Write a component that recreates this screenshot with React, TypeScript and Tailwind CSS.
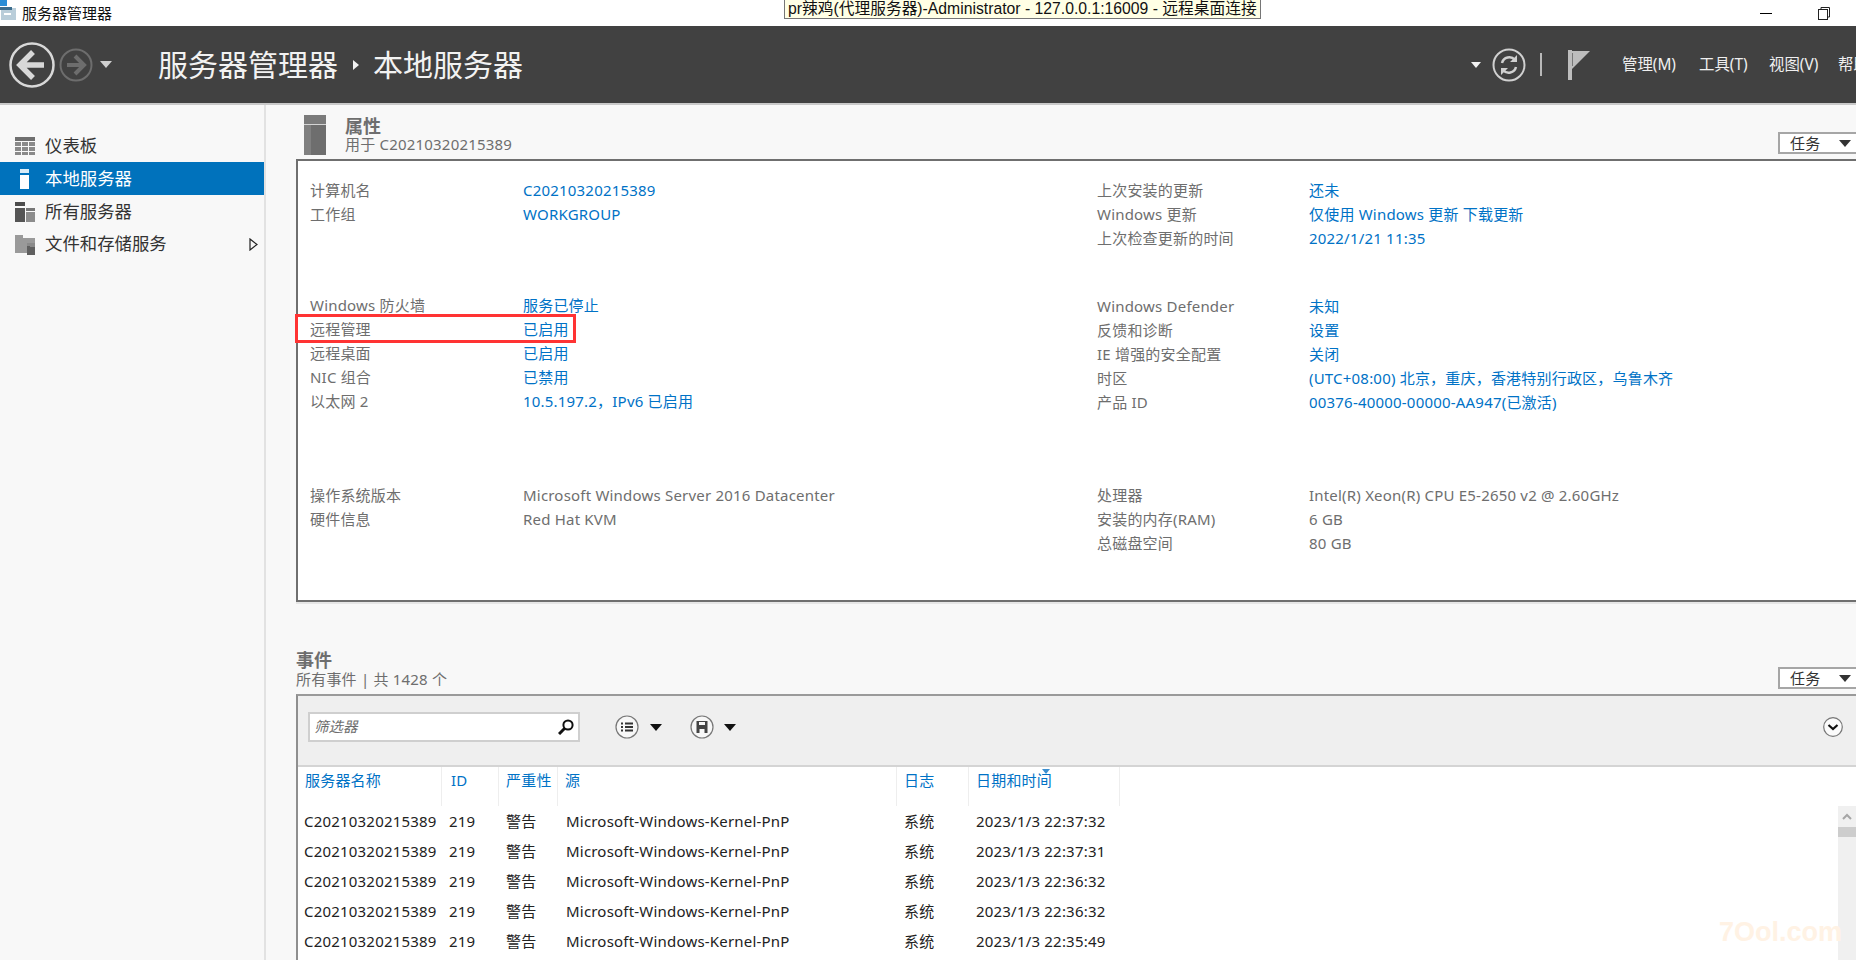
const sideItems = [
  { label: "仪表板", icon: "dashboard" },
  { label: "本地服务器", icon: "local" },
  { label: "所有服务器", icon: "all" },
  { label: "文件和存储服务", icon: "files" },
];

const props = [
  [
    [
      ["计算机名", "C20210320215389", true],
      ["工作组", "WORKGROUP", true],
    ],
    [
      ["上次安装的更新", "还未", true],
      ["Windows 更新", "仅使用 Windows 更新 下载更新", true],
      ["上次检查更新的时间", "2022/1/21 11:35", true],
    ],
  ],
  [
    [
      ["Windows 防火墙", "服务已停止", true],
      ["远程管理", "已启用", true],
      ["远程桌面", "已启用", true],
      ["NIC 组合", "已禁用", true],
      ["以太网 2", "10.5.197.2，IPv6 已启用", true],
    ],
    [
      ["Windows Defender", "未知", true],
      ["反馈和诊断", "设置", true],
      ["IE 增强的安全配置", "关闭", true],
      ["时区", "(UTC+08:00) 北京，重庆，香港特别行政区，乌鲁木齐", true],
      ["产品 ID", "00376-40000-00000-AA947(已激活)", true],
    ],
  ],
  [
    [
      ["操作系统版本", "Microsoft Windows Server 2016 Datacenter", false],
      ["硬件信息", "Red Hat KVM", false],
    ],
    [
      ["处理器", "Intel(R) Xeon(R) CPU E5-2650 v2 @ 2.60GHz", false],
      ["安装的内存(RAM)", "6 GB", false],
      ["总磁盘空间", "80 GB", false],
    ],
  ],
] as [string, string, boolean][][][];

const events = [
  "2023/1/3 22:37:32",
  "2023/1/3 22:37:31",
  "2023/1/3 22:36:32",
  "2023/1/3 22:36:32",
  "2023/1/3 22:35:49",
];

const columns = "grid grid-cols-[144px_57px_59px_339px_72px_151px]";

const SideIcon = ({ name }: { name: string }) => {
  if (name === "dashboard") {
    return (
      <svg width="20" height="20" viewBox="0 0 20 20">
        <rect y="1" width="20" height="4" fill="#6f6f6f" />
        <rect y="6" width="6" height="4" fill="#8a8a8a" />
        <rect x="7" y="6" width="6" height="4" fill="#8a8a8a" />
        <rect x="14" y="6" width="6" height="4" fill="#8a8a8a" />
        <rect y="11" width="6" height="4" fill="#8a8a8a" />
        <rect x="7" y="11" width="6" height="4" fill="#8a8a8a" />
        <rect x="14" y="11" width="6" height="4" fill="#8a8a8a" />
        <rect y="16" width="6" height="3" fill="#8a8a8a" />
        <rect x="7" y="16" width="6" height="3" fill="#8a8a8a" />
        <rect x="14" y="16" width="6" height="3" fill="#8a8a8a" />
      </svg>
    );
  }
  if (name === "local") {
    return (
      <svg width="20" height="20" viewBox="0 0 20 20">
        <rect x="5" y="0" width="9" height="4" fill="#d9ecf7" />
        <rect x="5" y="6" width="9" height="14" fill="#ffffff" />
      </svg>
    );
  }
  if (name === "all") {
    return (
      <svg width="20" height="20" viewBox="0 0 20 20">
        <rect x="0" y="0" width="10" height="4" fill="#4d4d4d" />
        <rect x="0" y="6" width="10" height="14" fill="#555555" />
        <rect x="11" y="6" width="9" height="3" fill="#777777" />
        <rect x="11" y="10" width="9" height="10" fill="#8c8c8c" />
      </svg>
    );
  }
  return (
    <svg width="20" height="20" viewBox="0 0 20 20">
      <path d="M0 0h8v3H20v5H12v10H0z" fill="#9a9a9a" />
      <path d="M12 8h8v9h-5v-3h-3z" fill="#8a8a8a" />
      <rect x="12" y="12" width="8" height="8" fill="#5f5f5f" />
      <rect x="12" y="11" width="3" height="2" fill="#5f5f5f" />
    </svg>
  );
};

const ServerIcon = () => (
  <svg width="22" height="40" viewBox="0 0 22 40" className="shrink-0">
    <rect width="22" height="9" fill="#7b7b7b" />
    <rect y="9" width="22" height="1" fill="#d4d4d4" />
    <rect y="10" width="22" height="30" fill="#6e6e6e" />
    <rect y="10" width="7" height="30" fill="#808080" />
  </svg>
);

const Triangle = ({ className }: { className: string }) => (
  <svg width="12" height="7" viewBox="0 0 12 7" className={className}>
    <path d="M0 0h12L6 7z" fill="currentColor" />
  </svg>
);

const TaskButton = () => (
  <div className="flex h-[22px] w-[78px] shrink-0 items-center border-2 border-r-0 border-[#a6a6a6] bg-white pl-[10px] text-[#333333] leading-[18px]">
    <span>任务</span>
    <Triangle className="ml-[19px] text-[#333333]" />
  </div>
);

const KeyValues = ({ rows, shift, labelWidth }: { rows: [string, string, boolean][]; shift?: boolean; labelWidth: string }) => (
  <div className={shift ? "mt-px" : ""}>
    {rows.map(([k, v, link]) => (
      <div key={k} className="flex h-[24px] items-center whitespace-nowrap leading-[24px]">
        <span className={`${labelWidth} shrink-0 text-[#6e6e6e]`}>{k}</span>
        <span className={link ? "text-[#0072c6]" : "text-[#6e6e6e]"}>{v}</span>
      </div>
    ))}
  </div>
);

export default function App() {
  return (
    <div className="relative flex h-[960px] w-[1856px] flex-col overflow-hidden bg-[#f8f8f8] font-['Noto_Sans','Noto_Sans_CJK_SC',sans-serif] text-[15px] tracking-[0.2px]">
      {/* title bar */}
      <div className="relative flex h-[26px] shrink-0 items-center bg-white">
        <svg width="18" height="21" viewBox="0 0 18 21" className="mb-[5px] shrink-0">
          <rect x="0" y="0" width="7" height="6" fill="#2a8dd6" />
          <rect x="1" y="8" width="15" height="12" fill="#b9cdd9" />
          <rect x="0" y="7" width="12" height="3" fill="#3d6d8d" />
          <rect x="4" y="13" width="7" height="2" fill="#fff" />
        </svg>
        <span className="ml-[4px] text-[15px] leading-[24px] tracking-normal text-[#111111]">服务器管理器</span>
        <div className="ml-auto mr-[26px] flex items-center">
          <div className="h-px w-[12px] bg-black" />
          <svg width="12" height="13" viewBox="0 0 12 13" className="ml-[46px]" fill="none" stroke="#222" strokeWidth="1">
            <rect x="0.5" y="2.5" width="9" height="10" />
            <path d="M3 2.5V0.5h8.5v9.5H9.5" />
          </svg>
        </div>
        <div className="absolute left-[784px] top-0 h-[19px] w-[477px] whitespace-nowrap border border-t-0 border-[#767676] bg-[#ffffe5] pl-[3px] font-['Liberation_Sans','Noto_Sans_CJK_SC',sans-serif] text-[15.74px] leading-[17px] tracking-normal text-[#111111]">
          pr辣鸡(代理服务器)-Administrator - 127.0.0.1:16009 - 远程桌面连接
        </div>
      </div>

      {/* dark header */}
      <div className="flex h-[77px] shrink-0 items-center bg-[#414141] pl-[9px] text-[#f2f2f2]">
        <svg width="46" height="48" viewBox="0 0 46 48" className="shrink-0" fill="none">
          <circle cx="23" cy="24" r="21.5" stroke="#d8d8d8" strokeWidth="2.5" />
          <path d="M24 11L11 24l13 13M11 24h24" stroke="#d8d8d8" strokeWidth="5.5" />
        </svg>
        <svg width="34" height="34" viewBox="0 0 34 34" className="ml-[4px] shrink-0" fill="none">
          <circle cx="17" cy="17" r="15.5" stroke="#6d6d6d" strokeWidth="2" />
          <path d="M16 8l9 9-9 9M25 17H8" stroke="#6d6d6d" strokeWidth="4" />
        </svg>
        <Triangle className="ml-[7px] text-[#cfcfcf]" />
        <span className="ml-[46px] text-[30px] leading-[40px] tracking-normal">服务器管理器</span>
        <svg width="6" height="10" viewBox="0 0 6 10" className="ml-[15px] shrink-0">
          <path d="M0 0l6 5-6 5z" fill="#f2f2f2" />
        </svg>
        <span className="ml-[14px] text-[30px] leading-[40px] tracking-normal">本地服务器</span>

        <Triangle className="ml-auto h-[6px] w-[10px] text-[#f2f2f2]" />
        <svg width="34" height="34" viewBox="0 0 34 34" className="ml-[11px] shrink-0" fill="none">
          <circle cx="17" cy="17" r="15.5" stroke="#d0d0d0" strokeWidth="2" />
          <path d="M10 15a7.5 7.5 0 0 1 13-3M24 19a7.5 7.5 0 0 1-13 3" stroke="#d0d0d0" strokeWidth="2.5" />
          <path d="M25 7v7h-7zM9 27v-7h7z" fill="#d0d0d0" />
        </svg>
        <div className="ml-[14px] h-[23px] w-[2px] bg-[#b8b8b8]" />
        <svg width="22" height="30" viewBox="0 0 22 30" className="ml-[26px] shrink-0">
          <rect x="0" y="0" width="4" height="30" fill="#bdbdbd" />
          <path d="M4 1h18L4 19z" fill="#bdbdbd" />
          <rect x="4" y="3" width="1" height="13" fill="#777777" />
        </svg>
        <div className="ml-[32px] flex w-[234px] shrink-0 items-center gap-[21px] whitespace-nowrap text-[15.4px] tracking-normal text-[#efefef]">
          <span className="w-[56px] shrink-0">管理(M)</span>
          <span className="w-[49px] shrink-0">工具(T)</span>
          <span className="w-[48px] shrink-0">视图(V)</span>
          <span className="shrink-0">帮助(H)</span>
        </div>
      </div>
      <div className="h-[2px] shrink-0 bg-[#c9c9c9]" />

      <div className="flex min-h-0 flex-1">
        {/* sidebar */}
        <div className="w-[266px] shrink-0 border-r-2 border-[#e2e2e2] pt-[24px] text-[17.4px] tracking-normal text-[#333333]">
          {sideItems.map((item) => (
            <div
              key={item.label}
              className={
                item.icon === "local"
                  ? "flex h-[33px] items-center bg-[#0072bc] pl-[15px] text-white"
                  : "flex h-[33px] items-center pl-[15px]"
              }
            >
              <SideIcon name={item.icon} />
              <span className={item.icon === "files" ? "mb-[3px] ml-[10px] leading-[24px]" : "mb-px ml-[10px] leading-[24px]"}>{item.label}</span>
              {item.icon === "files" && (
                <svg width="9" height="13" viewBox="0 0 9 13" className="ml-auto mr-[6px]" fill="none" stroke="#222" strokeWidth="1.2">
                  <path d="M1 1l7 5.5L1 12z" />
                </svg>
              )}
            </div>
          ))}
        </div>

        {/* main */}
        <div className="min-w-0 flex-1 pl-[30px]">
          <div className="flex h-[54px] items-end pl-[8px] pb-[4px]">
            <ServerIcon />
            <div className="ml-[19px] flex-1 text-[#6e6e6e]">
              <div className="text-[18px] font-bold leading-[18px] tracking-normal">属性</div>
              <div className="mb-[2px] leading-[18px]">用于 C20210320215389</div>
            </div>
            <div className="mb-px">
              <TaskButton />
            </div>
          </div>

          <div className="h-[443px] border-2 border-r-0 border-b-2 border-[#6f6f6f] bg-white pl-[12px] pt-[17px]">
            <div className="grid grid-cols-[787px_1fr] grid-rows-[115px_190px_1fr]">
              {props.map((group, i) =>
                group.map((rows, j) => (
                  <KeyValues
                    key={`${i}-${j}`}
                    rows={rows}
                    shift={j === 1 && i === 1}
                    labelWidth={j === 0 ? "w-[213px]" : "w-[212px]"}
                  />
                ))
              )}
            </div>
          </div>
          <div className="h-[2px] bg-[#e6e6e6]" />

          <div className="flex h-[90px] items-end pb-[5px]">
            <div className="flex-1 text-[#6e6e6e]">
              <div className="text-[18px] font-bold leading-[18px] tracking-normal">事件</div>
              <div className="leading-[20px]">所有事件 | 共 1428 个</div>
            </div>
            <TaskButton />
          </div>

          <div className="flex h-[266px] flex-col border-l-2 border-t-2 border-l-[#8f8f8f] border-t-[#9a9a9a] bg-white">
            <div className="flex h-[71px] shrink-0 items-start border-b-2 border-[#d4d4d4] bg-[#efefef] pl-[10px] pt-[16px]">
              <div className="flex h-[30px] w-[272px] items-center justify-between border-2 border-[#cfcfcf] bg-white pl-[4px] pr-[4px] text-[14.5px] italic tracking-normal text-[#6e6e6e]">
                <span>筛选器</span>
                <svg width="16" height="16" viewBox="0 0 16 16" fill="none" stroke="#111" strokeWidth="2">
                  <circle cx="10" cy="6" r="4.6" />
                  <path d="M6.5 9.5L1 15" strokeWidth="3" />
                </svg>
              </div>
              <svg width="24" height="24" viewBox="0 0 24 24" className="ml-[35px] mt-[3px]" fill="none">
                <circle cx="12" cy="12" r="11" fill="#f7f7f7" stroke="#777" strokeWidth="1.2" />
                <path d="M6 7.5h2v2H6zM6 11h2v2H6zM6 14.5h2v2H6zM10 7.5h8v2h-8zM10 11h8v2h-8zM10 14.5h8v2h-8z" fill="#333" />
              </svg>
              <Triangle className="ml-[11px] mt-[12px] text-[#111111]" />
              <svg width="24" height="24" viewBox="0 0 24 24" className="ml-[28px] mt-[3px]" fill="none">
                <circle cx="12" cy="12" r="11" fill="#f7f7f7" stroke="#777" strokeWidth="1.2" />
                <path d="M6.5 6h11v12h-3v-4h-5v4h-3z" fill="#444" />
                <rect x="9" y="7" width="6" height="3" fill="#f7f7f7" />
              </svg>
              <Triangle className="ml-[10px] mt-[12px] text-[#111111]" />
              <svg width="20" height="20" viewBox="0 0 20 20" className="ml-auto mr-[13px] mt-[5px]" fill="none">
                <circle cx="10" cy="10" r="9.3" fill="#fbfbfb" stroke="#777" strokeWidth="1.2" />
                <path d="M5.5 8l4.5 4 4.5-4" stroke="#111" strokeWidth="2.2" />
              </svg>
            </div>

            <div className={`${columns} h-[39px] shrink-0 leading-[26px] text-[#0072c6]`}>
              <div className="border-r border-[#eeeeee] pl-[7px]">服务器名称</div>
              <div className="border-r border-[#eeeeee] pl-[9px]">ID</div>
              <div className="border-r border-[#eeeeee] pl-[7px]">严重性</div>
              <div className="border-r border-[#eeeeee] pl-[7px]">源</div>
              <div className="border-r border-[#eeeeee] pl-[7px]">日志</div>
              <div className="relative border-r border-[#eeeeee] pl-[7px]">
                日期和时间
                <svg width="8" height="5" viewBox="0 0 8 5" className="absolute left-[73px] top-[2px]">
                  <path d="M0 0h8L4 5z" fill="#3c8fd0" />
                </svg>
              </div>
            </div>

            <div className="flex min-h-0 flex-1">
              <div className="min-w-0 flex-1 text-[#222222]">
                {events.map((time, i) => (
                  <div key={i} className={`${columns} h-[30px] items-center whitespace-nowrap leading-[30px]`}>
                    <div className="pl-[6px]">C20210320215389</div>
                    <div className="pl-[7px]">219</div>
                    <div className="pl-[7px]">警告</div>
                    <div className="pl-[8px]">Microsoft-Windows-Kernel-PnP</div>
                    <div className="pl-[7px]">系统</div>
                    <div className="pl-[7px]">{time}</div>
                  </div>
                ))}
              </div>
              <div className="w-[18px] shrink-0 bg-[#f0f0f0]">
                <svg width="18" height="21" viewBox="0 0 18 21" fill="none" stroke="#a6a6a6" strokeWidth="2">
                  <path d="M5 13l4-4 4 4" />
                </svg>
                <div className="h-[10px] bg-[#cdcdcd]" />
              </div>
            </div>
          </div>
        </div>
      </div>

      {/* annotation drawn over the screenshot */}
      <div className="absolute left-[295px] top-[314px] h-[29px] w-[281px] border-[3px] border-[#ff3333]" />

      <div className="absolute left-[1719px] top-[914px] font-['Liberation_Sans',sans-serif] text-[27px] font-bold leading-[36px] tracking-normal text-[#fff2e4]">
        7Ool.com
      </div>
    </div>
  );
}
